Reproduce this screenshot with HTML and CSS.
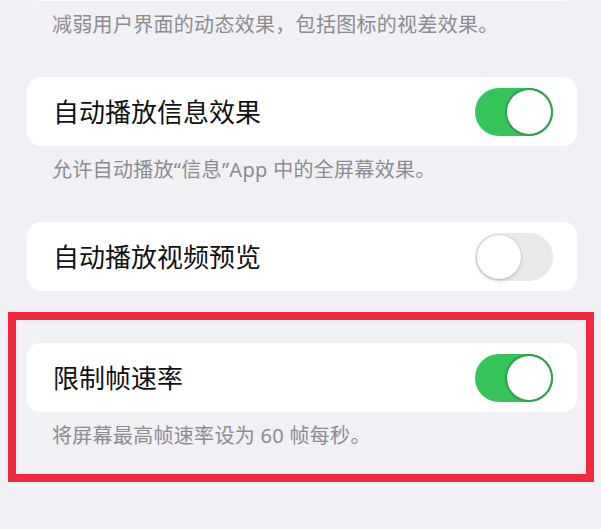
FILE: index.html
```html
<!DOCTYPE html>
<html lang="zh-CN">
<head>
    <meta charset="UTF-8">
    <meta name="viewport" content="width=device-width, initial-scale=1.0">
    <title>动态效果</title>
    <link rel="stylesheet" href="styles.css">
</head>
<body>
    <div class="settings">
        <div class="group">
            <div class="cell cell-cut"></div>
            <p class="footer">减弱用户界面的动态效果，包括图标的视差效果。</p>
        </div>

        <div class="group">
            <div class="cell">
                <span class="label">自动播放信息效果</span>
                <span class="switch on"><span class="knob"></span></span>
            </div>
            <p class="footer">允许自动播放“信息”App 中的全屏幕效果。</p>
        </div>

        <div class="group">
            <div class="cell">
                <span class="label">自动播放视频预览</span>
                <span class="switch"><span class="knob"></span></span>
            </div>
        </div>

        <div class="highlight">
            <div class="cell">
                <span class="label">限制帧速率</span>
                <span class="switch on"><span class="knob"></span></span>
            </div>
            <p class="footer">将屏幕最高帧速率设为 60 帧每秒。</p>
        </div>
    </div>
</body>
</html>
```

FILE: styles.css
```css
* {
    margin: 0;
    padding: 0;
    box-sizing: border-box;
}

body {
    background-color: #f0f0f5;
    font-family: 'Noto Sans', 'Noto Sans CJK SC', sans-serif;
    color: #000;
    overflow: hidden;
}

.settings {
    padding: 0 24px 0 27px;
}

.group {
    margin-bottom: 40px;
}

.cell {
    background-color: #fff;
    border-radius: 14px;
    height: 69px;
    padding: 0 24px 0 26px;
    display: flex;
    align-items: center;
    justify-content: space-between;
}

/* only the bottom of the first card is on screen */
.cell-cut {
    margin-top: -68px;
}

.label {
    font-size: 26px;
    line-height: 30px;
    color: #111;
}

.footer {
    font-size: 20px;
    line-height: 24px;
    color: #8c8c91;
    padding: 12px 0 0 25px;
    letter-spacing: 0.3px;
}

.switch {
    width: 78px;
    height: 48px;
    border-radius: 24px;
    background-color: #e9e9eb;
    padding: 2px;
    display: flex;
}

.switch .knob {
    width: 44px;
    height: 44px;
    border-radius: 50%;
    background-color: #fff;
    box-shadow: 0 0 0 1px rgba(0, 0, 0, 0.08), 0 2px 4px rgba(0, 0, 0, 0.12);
}

.switch.on {
    background-color: #35c45a;
    justify-content: flex-end;
}

.switch.on .knob {
    box-shadow: 0 0 0 2px #2f9f4c;
}

.highlight {
    margin: -19px -17px 0 -19px;
    border: 8px solid #f22a3e;
    padding: 23px 9px 26px 11px;
}
```
